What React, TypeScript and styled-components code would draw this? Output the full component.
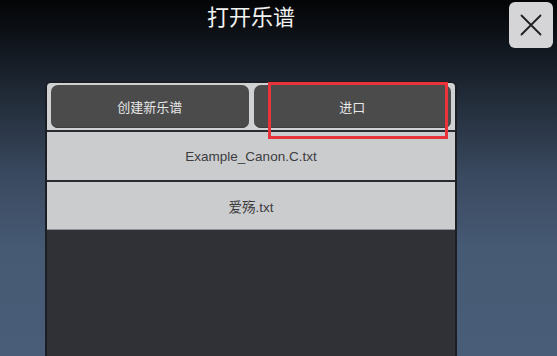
import React from "react";
import styled, { createGlobalStyle } from "styled-components";

const GlobalStyle = createGlobalStyle`
  html, body {
    margin: 0;
    padding: 0;
    height: 356px;
    overflow: hidden;
  }
  body {
    font-family: "Liberation Sans", "Noto Sans CJK SC", Arial, sans-serif;
  }
`;

const Screen = styled.div`
  width: 557px;
  height: 356px;
  display: flex;
  flex-direction: column;
  background: linear-gradient(
    180deg,
    #030405 0%,
    #121820 14%,
    #222c39 28%,
    #3a4a60 50%,
    #475a74 70%,
    #4a5d78 100%
  );
  overflow: hidden;
`;

const TopBar = styled.div`
  display: flex;
  align-items: flex-start;
  height: 81px;
`;

const Title = styled.h1`
  width: 412px;
  margin: 0 0 0 45px;
  text-align: center;
  color: #f2f2f2;
  font-size: 22px;
  font-weight: normal;
  line-height: 30px;
  font-family: "Noto Sans CJK SC", sans-serif;
`;

const CloseButton = styled.button`
  margin: 2px 4px 0 auto;
  width: 44px;
  height: 46px;
  padding: 0;
  border: none;
  border-radius: 6px;
  background: #d5d5d7;
  display: flex;
  align-items: center;
  justify-content: center;
`;

const Panel = styled.div`
  position: relative;
  width: 408px;
  margin-left: 45px;
  flex: 1;
  display: flex;
  flex-direction: column;
  border: 2px solid #1b1e25;
  border-bottom: none;
  border-radius: 6px 6px 0 0;
  background: #303136;
`;

const ButtonBar = styled.div`
  display: grid;
  grid-template-columns: 1fr 1fr;
  gap: 5px;
  padding: 2px 4px 2px;
  background: #d0d1d3;
  border-radius: 4px 4px 0 0;
`;

const ActionButton = styled.button`
  height: 43px;
  border: none;
  border-radius: 7px;
  background: #4b4b4c;
  color: #e8e8e8;
  font-size: 13px;
  font-family: "Noto Sans CJK SC", sans-serif;
  box-shadow: inset 0 -1px 0 #3e3e3f;
`;

const FileList = styled.div`
  display: flex;
  flex-direction: column;
`;

const FileRow = styled.div`
  height: 48px;
  display: flex;
  align-items: center;
  justify-content: center;
  background: #cbccce;
  border-top: 2px solid #2a2b30;
  color: #3c3c3e;
  font-size: 13.5px;
  font-family: "Liberation Sans", "Noto Sans CJK SC", sans-serif;

  &:last-child {
    height: 47px;
    border-bottom: 1px solid #8e8f93;
  }
`;

const Highlight = styled.div`
  position: absolute;
  left: 221px;
  top: -1px;
  width: 174px;
  height: 51px;
  border: 3px solid #e8333b;
  pointer-events: none;
`;

const CloseIcon = () => (
  <svg width="24" height="24" viewBox="0 0 24 24">
    <path d="M2.5 2.5 L21.5 21.5 M21.5 2.5 L2.5 21.5" stroke="#1e1e20" strokeWidth="1.8" strokeLinecap="round" />
  </svg>
);

const files = ["Example_Canon.C.txt", "爱殇.txt"];

export default function App() {
  return (
    <>
      <GlobalStyle />
      <Screen>
        <TopBar>
          <Title>打开乐谱</Title>
          <CloseButton aria-label="关闭">
            <CloseIcon />
          </CloseButton>
        </TopBar>
        <Panel>
          <ButtonBar>
            <ActionButton>创建新乐谱</ActionButton>
            <ActionButton>进口</ActionButton>
          </ButtonBar>
          <FileList>
            {files.map((f) => (
              <FileRow key={f}>{f}</FileRow>
            ))}
          </FileList>
          <Highlight />
        </Panel>
      </Screen>
    </>
  );
}
